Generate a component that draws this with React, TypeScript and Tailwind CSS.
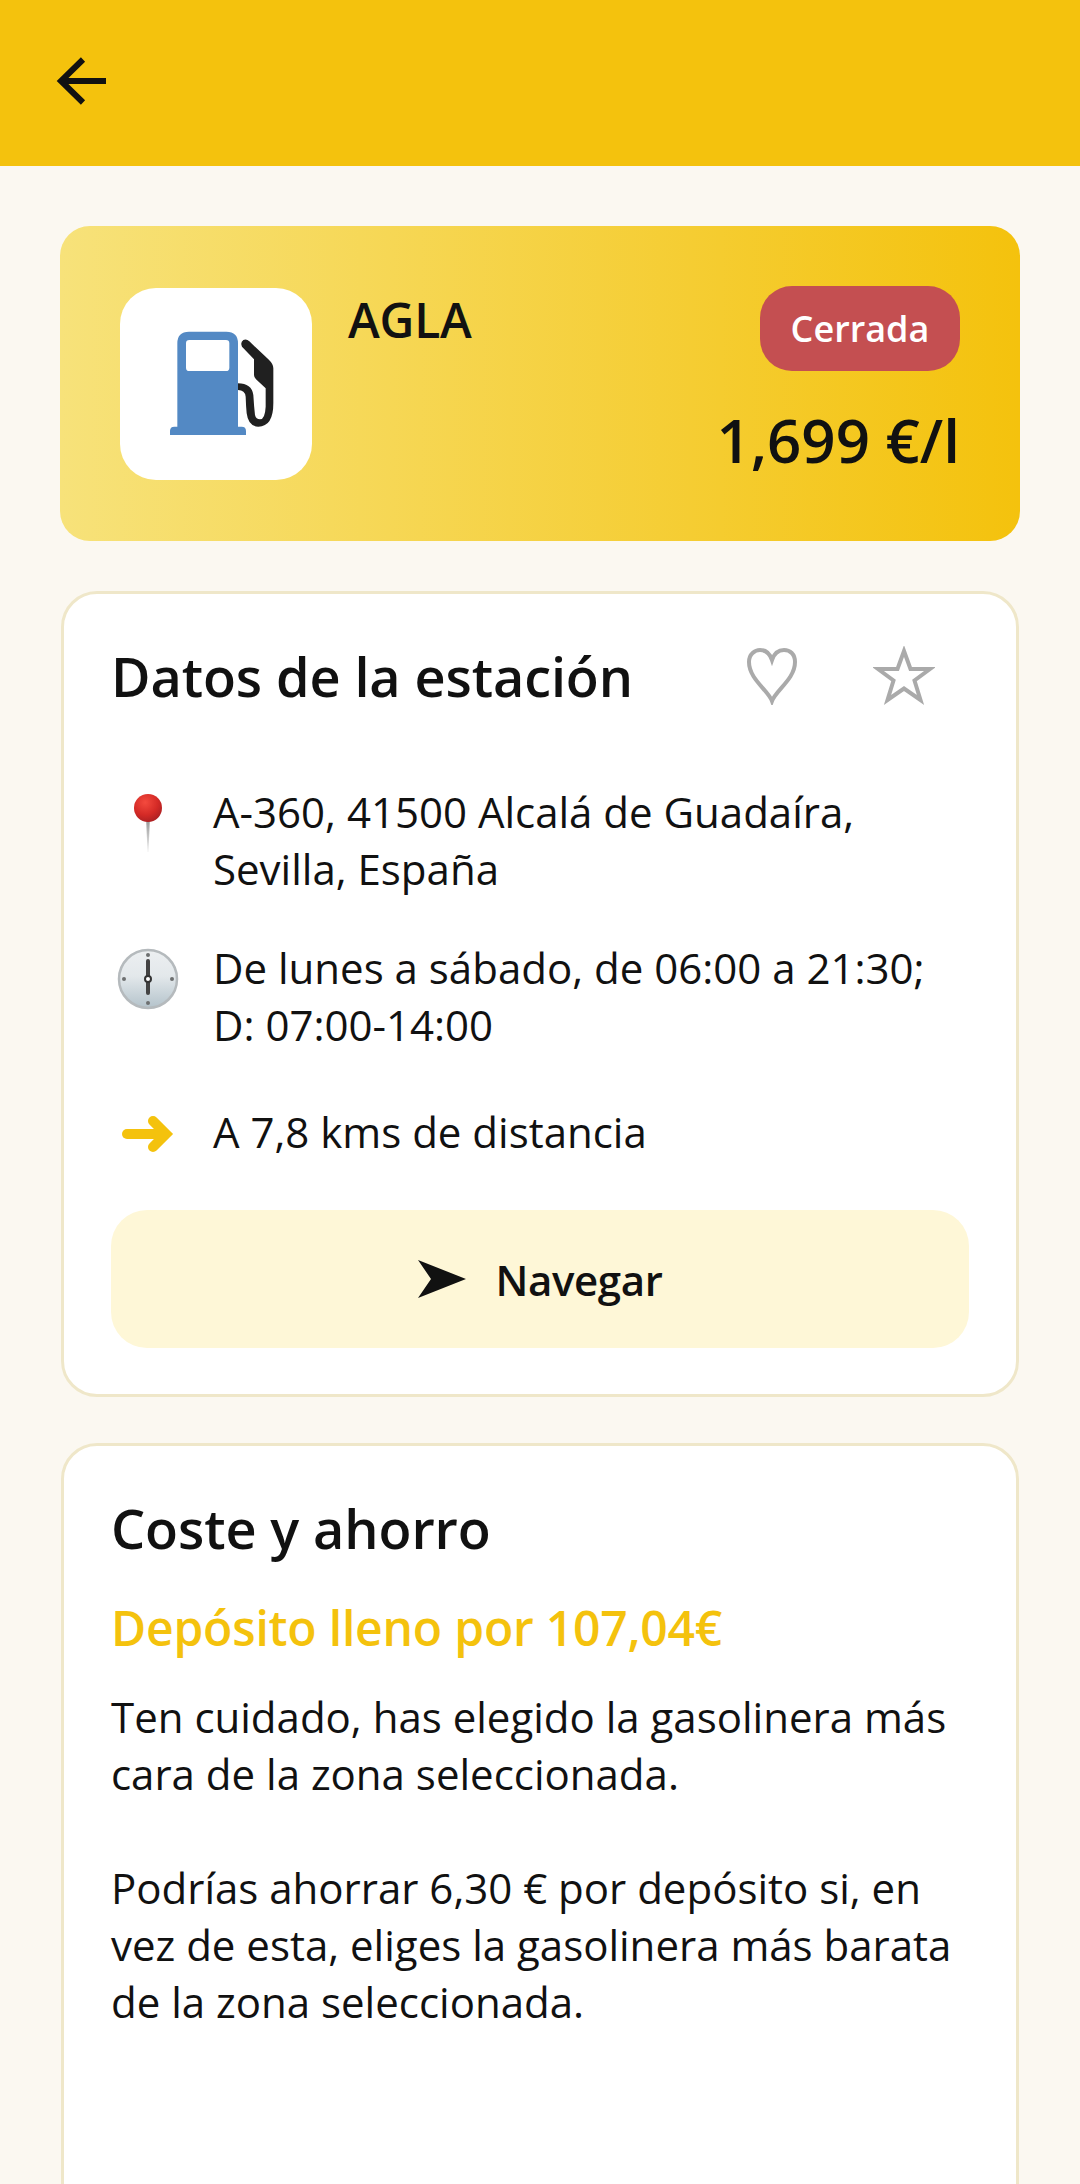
const BackArrow = () => (
    <svg width="64" height="64" viewBox="0 0 64 64">
        <path d="M56 32H11M33 10.5L11 32L33 53.5" fill="none" stroke="#111111" strokeWidth="6" />
    </svg>
)

const PumpIcon = () => (
    <svg width="192" height="192" viewBox="-90 -36 576 576">
        <path
            fillRule="evenodd"
            fill="#5389c4"
            d="M82 380V130Q82 95 117 95H229Q264 95 264 130V380H275Q288 380 288 393V405H60V393Q60 380 73 380ZM118 120Q108 120 108 130V203Q108 213 118 213H228Q238 213 238 203V130Q238 120 228 120Z"
        />
        <path
            fill="#202020"
            d="M276 140Q270 128 280 120Q290 116 298 124L355 178Q370 192 370 205V310Q370 380 325 380Q295 380 290 340Q288 320 287 290Q285 270 264 270V250Q305 250 310 285Q312 320 315 345Q318 358 330 358Q345 358 347 320V265L318 238Q312 232 312 225V178Z"
        />
    </svg>
)

const PinIcon = () => (
    <svg width="72" height="72" viewBox="0 0 72 72">
        <defs>
            <radialGradient id="pinHead" cx="0.4" cy="0.3" r="0.75">
                <stop offset="0" stopColor="#f44a3e" />
                <stop offset="0.6" stopColor="#d42a26" />
                <stop offset="1" stopColor="#a81f22" />
            </radialGradient>
            <linearGradient id="pinNeedle" x1="0" y1="0" x2="0" y2="1">
                <stop offset="0" stopColor="#8a8a8a" />
                <stop offset="1" stopColor="#f4f4f4" />
            </linearGradient>
        </defs>
        <path d="M34 26H38L36.5 62H35.5Z" fill="url(#pinNeedle)" />
        <circle cx="36" cy="18" r="14" fill="url(#pinHead)" />
    </svg>
)

const ClockIcon = () => (
    <svg width="72" height="72" viewBox="0 0 72 72">
        <defs>
            <linearGradient id="clockFace" x1="0" y1="0" x2="0" y2="1">
                <stop offset="0" stopColor="#eceff1" />
                <stop offset="0.45" stopColor="#e3e8eb" />
                <stop offset="1" stopColor="#b4c3cb" />
            </linearGradient>
        </defs>
        <circle cx="36" cy="36" r="29" fill="url(#clockFace)" stroke="#b5babd" strokeWidth="2.5" />
        <circle cx="36" cy="12" r="2" fill="#6d6f70" />
        <circle cx="36" cy="60" r="2" fill="#6d6f70" />
        <circle cx="12" cy="36" r="2" fill="#6d6f70" />
        <circle cx="60" cy="36" r="2" fill="#6d6f70" />
        <path d="M36 18V50" stroke="#434343" strokeWidth="4" strokeLinecap="round" />
        <circle cx="36" cy="36" r="3" fill="#fff" stroke="#333" strokeWidth="2" />
    </svg>
)

const RightArrow = () => (
    <svg width="72" height="40" viewBox="0 0 72 40">
        <path d="M15 20H50" fill="none" stroke="#f4c20d" strokeWidth="10" strokeLinecap="round" />
        <path d="M41 7L54 20L41 33" fill="none" stroke="#f4c20d" strokeWidth="10" strokeLinecap="round" />
    </svg>
)

const HeartIcon = () => (
    <svg width="52" height="58" viewBox="0 0 52 58">
        <path
            d="M26 54C22 43 3 32 3 15C3 7 9 3 14 3C20 3 24 7 26 13C28 7 32 3 38 3C44 3 49 7 49 15C49 32 30 43 26 54Z"
            fill="none"
            stroke="#aaaaaa"
            strokeWidth="4"
        />
    </svg>
)

const StarIcon = () => (
    <svg width="62" height="60" viewBox="0 0 62 60">
        <path
            d="M31 5L37.5 23H57L41.5 34.5L47.5 54L31 42.5L14.5 54L20.5 34.5L5 23H24.5Z"
            fill="none"
            stroke="#aaaaaa"
            strokeWidth="4"
        />
    </svg>
)

const NavArrow = () => (
    <svg width="48" height="38" viewBox="0 0 48 38">
        <path d="M0 0L48 19L0 38L13 19Z" fill="#111111" />
    </svg>
)

export default function App() {
    return (
        <div className="h-[2184px] overflow-hidden bg-[#fbf8f1] font-['Open_Sans',sans-serif] text-[#111111]">
            <header className="flex h-[166px] items-center bg-[#f4c20d] pb-[4px] pl-[50px]">
                <BackArrow />
            </header>

            <main className="flex flex-col px-[60px] pt-[60px]">
                <section className="flex h-[315px] rounded-[30px] bg-linear-to-r/srgb from-[#f7e27a] to-[#f4c20d] px-[60px] pt-[62px]">
                    <div className="flex size-[192px] items-center justify-center rounded-[36px] bg-white">
                        <PumpIcon />
                    </div>
                    <div className="ml-[36px] text-[48px] leading-[64px] font-semibold tracking-[-0.2px]">AGLA</div>
                    <div className="ml-auto -mt-[2px] flex flex-col items-end">
                        <span className="flex h-[85px] w-[200px] items-center justify-center rounded-[32px] bg-[#c44f51] text-[36px] font-semibold text-white">
                            Cerrada
                        </span>
                        <span className="mt-[32px] text-[60px] leading-[74px] font-semibold">1,699 €/l</span>
                    </div>
                </section>

                <section className="mx-[1px] mt-[50px] h-[806px] rounded-[36px] border-[3px] border-[#efe7c9] bg-white px-[47px] pt-[46px]">
                    <div className="flex h-[72px] items-center">
                        <h2 className="text-[54px] leading-[72px] font-semibold tracking-[-0.1px]">Datos de la estación</h2>
                        <div className="ml-auto mr-[34px] flex items-center gap-[75px]">
                            <HeartIcon />
                            <StarIcon />
                        </div>
                    </div>

                    <ul className="mt-[71px] flex flex-col pl-[1px] text-[42px] leading-[57px]">
                        <li className="flex">
                            <span className="mt-[7px] w-[72px]"><PinIcon /></span>
                            <span className="ml-[29px]">A-360, 41500 Alcalá de Guadaíra,<br />Sevilla, España</span>
                        </li>
                        <li className="mt-[42px] flex">
                            <span className="mt-[4px] w-[72px]"><ClockIcon /></span>
                            <span className="ml-[29px]">De lunes a sábado, de 06:00 a 21:30;<br />D: 07:00-14:00</span>
                        </li>
                        <li className="mt-[50px] flex items-center">
                            <span className="flex w-[72px] pt-[5px]"><RightArrow /></span>
                            <span className="ml-[29px]">A 7,8 kms de distancia</span>
                        </li>
                    </ul>

                    <button className="mt-[50px] flex h-[138px] w-[858px] items-center justify-center gap-[30px] rounded-[36px] bg-[#fef7d7] text-[42px] font-semibold tracking-[-0.4px]">
                        <NavArrow />
                        Navegar
                    </button>
                </section>

                <section className="mx-[1px] mt-[46px] h-[900px] rounded-[36px] border-[3px] border-[#efe7c9] bg-white px-[47px] pt-[46px]">
                    <h2 className="text-[54px] leading-[72px] font-semibold tracking-[-0.1px]">Coste y ahorro</h2>
                    <p className="mt-[32px] text-[48px] leading-[64px] font-semibold tracking-[-0.2px] text-[#f4c20d]">Depósito lleno por 107,04€</p>
                    <p className="mt-[28px] text-[42px] leading-[57px]">
                        Ten cuidado, has elegido la gasolinera más<br />
                        cara de la zona seleccionada.
                    </p>
                    <p className="mt-[57px] text-[42px] leading-[57px]">
                        Podrías ahorrar 6,30 € por depósito si, en<br />
                        vez de esta, eliges la gasolinera más barata<br />
                        de la zona seleccionada.
                    </p>
                </section>
            </main>
        </div>
    )
}
